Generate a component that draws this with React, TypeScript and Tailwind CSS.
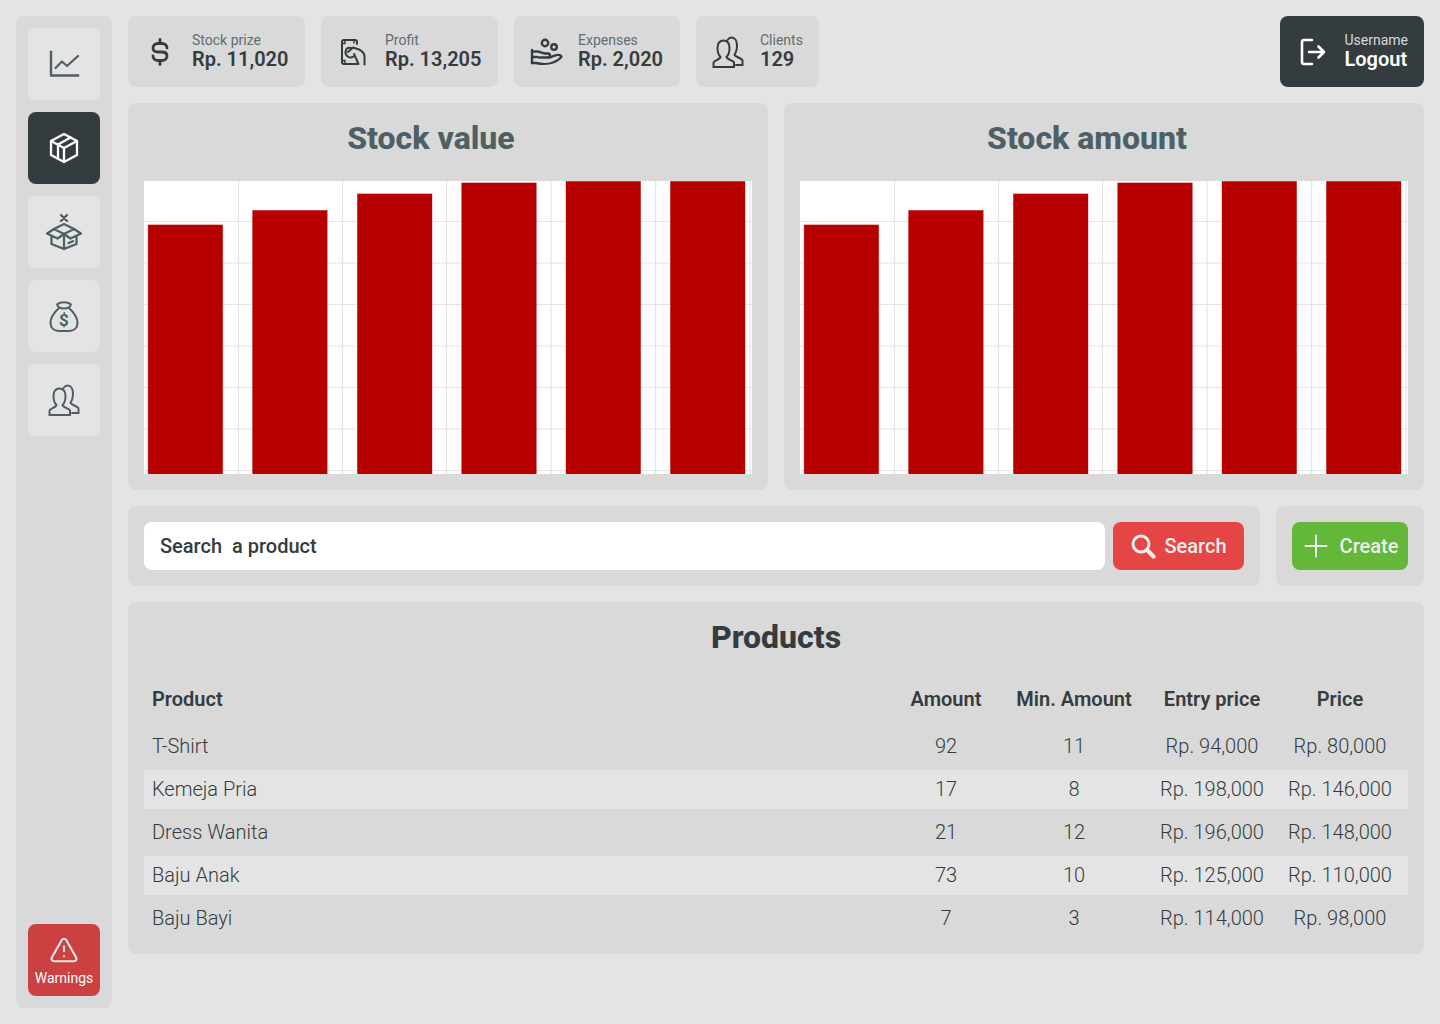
import type { ReactNode } from "react";
import { TriangleAlert } from "lucide-react";

const Icon = ({ children, className = "" }: { children: ReactNode; className?: string }) => (
  <svg
    viewBox="0 0 36 36"
    fill="none"
    stroke="currentColor"
    strokeWidth="2"
    strokeLinecap="round"
    strokeLinejoin="round"
    className={`h-9 w-9 shrink-0 overflow-visible ${className}`}
  >
    {children}
  </svg>
);

const ChartIcon = () => (
  <Icon>
    <path d="M5 6V29.5H32" strokeLinecap="square" strokeWidth="2.4" />
    <path d="M9.5 22L16 15.5L21 20L32 10" strokeWidth="2.2" />
  </Icon>
);

const BoxIcon = () => (
  <Icon>
    <path d="M18 4L31 11V25L18 32L5 25V11Z" strokeWidth="2.3" />
    <path d="M5 11L18 18L31 11M18 18V32M24.5 7.5L12 14.5V28.5" strokeWidth="2.3" />
  </Icon>
);

const OpenBoxIcon = () => (
  <Icon>
    <path d="M15 1L21 7M21 1L15 7" strokeWidth="2.4" />
    <path d="M8 15L18 10L28 15L18 20Z" strokeWidth="2.3" />
    <path d="M8 15L1 19.5L11.5 24.5L18 20L24.5 24.5L35 19.5L28 15" strokeWidth="2.3" />
    <path d="M5.5 22.5V30L18 35L30.5 30V22.5M18 20V35M22.5 29L27 27.2" strokeWidth="2.3" />
  </Icon>
);

const BagIcon = () => (
  <Icon>
    <path d="M11 6.5C14 3.5 22 3.5 25 6.5C24 9.5 22 10.5 18 10.5C14 10.5 12 9.5 11 6.5Z" />
    <path d="M13 10C8 14.5 4.5 20 4.5 25C4.5 30 8 33 13 33H23C28 33 31.5 30 31.5 25C31.5 20 28 14.5 23 10" />
    <text
      x="18"
      y="28"
      fill="currentColor"
      stroke="none"
      textAnchor="middle"
      className="text-[17px] font-bold"
    >
      $
    </text>
  </Icon>
);

const UsersIcon = () => (
  <Icon>
    <path
      d="M3.5 33V28.5C3.5 27 10 25.5 10.5 23C8 20.5 7.5 17 7.5 14C7.5 9 10 6.5 13.5 6.5C17 6.5 19.5 9 19.5 14C19.5 17 19 20.5 16.5 23C17 25.5 24 27 24 28.5V33Z"
      strokeLinejoin="miter"
    />
    <path
      d="M17.5 6C18.5 4.5 20 3.5 21.5 3.5C25 3.5 27 7 27 11.5C27 14.5 26.5 18 24.5 20.5C25 23 32.5 24.5 32.5 26.5V31H26"
      strokeLinejoin="miter"
    />
  </Icon>
);

const DollarIcon = () => (
  <Icon>
    <path
      d="M18 5.5V9.5M18 26.5V30.5M25 14C25 11.5 23 9.5 20 9.5H16C13 9.5 11 11.5 11 14C11 16.5 13 18 16 18H20C23 18 25 19.5 25 22C25 24.5 23 26.5 20 26.5H16C13 26.5 11 24.5 11 22"
      strokeWidth="2.8"
    />
  </Icon>
);

const ProfitIcon = () => (
  <Icon>
    <path d="M22 10V8A2 2 0 0 0 20 6H9A2 2 0 0 0 7 8V28A2 2 0 0 0 9 30H22" />
    <path d="M7.5 9.5H10V6.5M19 6.5V9M7.5 26.5H10V29.5" strokeWidth="1.5" />
    <path d="M16 14C11.5 12.5 9.5 17 11 20.5C12.5 23.5 16 24.5 18.5 22.5" />
    <path d="M13 18L18 13.5L24 15.5C28 17.5 29.5 19.5 29.5 22.5V30.5M19 20L23.5 30" />
  </Icon>
);

const ExpensesIcon = () => (
  <Icon>
    <circle cx="17" cy="9" r="3.2" strokeWidth="2.4" />
    <circle cx="26" cy="13" r="2.8" strokeWidth="2.4" />
    <path d="M4 16V29M4 17.5H9C12 17.5 15 19.5 17 19.5H20C22.5 19.5 22.5 23.5 20 23.5H11" strokeWidth="2.4" />
    <path d="M4 29H8C12 30 20 30.5 25 28.5C29 27 32 25 33.5 22.5C32 20 28 20.5 22 23.5" strokeWidth="2.4" />
    <path d="M4 23H9" strokeWidth="2.4" />
  </Icon>
);

const LogoutIcon = () => (
  <Icon>
    <path d="M18 6H10A2 2 0 0 0 8 8V28A2 2 0 0 0 10 30H18" strokeWidth="2.6" />
    <path d="M15 18H30M24.5 12.5L30 18L24.5 23.5" strokeWidth="2.6" />
  </Icon>
);

const SearchIcon = () => (
  <svg viewBox="0 0 26 26" fill="none" stroke="currentColor" strokeLinecap="round" className="h-[26px] w-[26px] shrink-0">
    <circle cx="11" cy="11" r="8" strokeWidth="3" />
    <path d="M18 18L23.5 23.5" strokeWidth="4.2" />
  </svg>
);

const PlusIcon = () => (
  <svg viewBox="0 0 24 24" fill="none" stroke="currentColor" strokeWidth="2" strokeLinecap="round" className="h-6 w-6 shrink-0">
    <path d="M12 1.5V22.5M1.5 12H22.5" />
  </svg>
);

const navItems = [
  { icon: <ChartIcon /> },
  { icon: <BoxIcon />, active: true },
  { icon: <OpenBoxIcon /> },
  { icon: <BagIcon /> },
  { icon: <UsersIcon /> },
];

const stats = [
  { label: "Stock prize", value: "Rp. 11,020", icon: <DollarIcon />, width: "w-[177px]" },
  { label: "Profit", value: "Rp. 13,205", icon: <ProfitIcon />, width: "w-[177px]" },
  { label: "Expenses", value: "Rp. 2,020", icon: <ExpensesIcon />, width: "w-[166px]" },
  { label: "Clients", value: "129", icon: <UsersIcon />, width: "w-[123px]" },
];

const barX = [4.1, 108.6, 213.4, 317.7, 422, 526.4];
const barTop = [43.9, 29.4, 12.9, 1.9, 0.4, 0.4];
const gridY = [40.5, 82, 123.5, 165, 206.5, 248, 289.5];
const gridX = [94.5, 198.5, 302.5, 407, 511.5, 606];

const BarChart = () => (
  <svg viewBox="0 0 608 293" className="block h-[293px] w-full bg-white">
    {gridY.map((y) => (
      <line key={y} x1="0" x2="608" y1={y} y2={y} stroke="#e4e4e4" strokeWidth="1.2" />
    ))}
    {gridX.map((x) => (
      <line key={x} x1={x} x2={x} y1="0" y2="293" stroke="#e4e4e4" strokeWidth="1.2" />
    ))}
    {barX.map((x, i) => (
      <rect
        key={x}
        x={x}
        y={barTop[i]}
        width="74.6"
        height={293 - barTop[i]}
        fill="#b90000"
        stroke="#b90000"
        strokeOpacity="0.45"
        strokeWidth="0.8"
      />
    ))}
  </svg>
);

const products = [
  ["T-Shirt", "92", "11", "Rp. 94,000", "Rp. 80,000"],
  ["Kemeja Pria", "17", "8", "Rp. 198,000", "Rp. 146,000"],
  ["Dress Wanita", "21", "12", "Rp. 196,000", "Rp. 148,000"],
  ["Baju Anak", "73", "10", "Rp. 125,000", "Rp. 110,000"],
  ["Baju Bayi", "7", "3", "Rp. 114,000", "Rp. 98,000"],
];

const ChartCard = ({ title }: { title: string }) => (
  <div className="flex-1 rounded-lg bg-[#d9d9d9] p-4">
    <h2 className="mb-6 pr-[34px] text-center text-[32px] leading-[38px] font-extrabold text-[#4f5f66]">
      {title}
    </h2>
    <BarChart />
  </div>
);

export default function App() {
  return (
    <div className="flex h-screen gap-4 bg-[#e4e4e4] p-4 font-[Roboto,sans-serif] text-[#343c40]">
      <aside className="flex w-24 shrink-0 flex-col justify-between rounded-lg bg-[#d9d9d9] p-3">
        <nav className="flex flex-col gap-3">
          {navItems.map((item, i) => (
            <div
              key={i}
              className={`flex h-[72px] items-center justify-center rounded-lg ${
                item.active ? "bg-[#343c40] text-white" : "bg-[#e4e4e4] text-[#4f5f66]"
              }`}
            >
              {item.icon}
            </div>
          ))}
        </nav>
        <div className="flex h-[72px] flex-col items-center justify-center gap-[5px] rounded-lg bg-[#cb4040] pt-px text-white">
          <TriangleAlert className="h-[30px] w-[30px] text-[#e6e6e6]" strokeWidth={1.7} />
          <span className="text-sm leading-4">Warnings</span>
        </div>
      </aside>

      <main className="flex min-w-0 flex-1 flex-col gap-4">
        <header className="flex justify-between">
          <div className="flex gap-4">
            {stats.map((s) => (
              <div key={s.label} className={`flex h-[71px] items-center gap-4 rounded-lg bg-[#d9d9d9] px-4 ${s.width}`}>
                <div className="flex w-8 justify-center">{s.icon}</div>
                <div>
                  <p className="text-sm leading-4 text-[#5d6d73]">{s.label}</p>
                  <p className="text-xl leading-[23px] font-semibold">{s.value}</p>
                </div>
              </div>
            ))}
          </div>
          <div className="flex h-[71px] items-center gap-4 rounded-lg bg-[#343c40] px-4 text-white">
            <div className="flex w-8 justify-center">
              <LogoutIcon />
            </div>
            <div>
              <p className="text-sm leading-4 text-[#d9d9d9]">Username</p>
              <p className="text-xl leading-[23px] font-semibold">Logout</p>
            </div>
          </div>
        </header>

        <section className="flex gap-4">
          <ChartCard title="Stock value" />
          <ChartCard title="Stock amount" />
        </section>

        <section className="flex gap-4">
          <div className="flex flex-1 gap-2 rounded-lg bg-[#d9d9d9] p-4">
            <input
              readOnly
              defaultValue="Search  a product"
              className="h-12 min-w-0 flex-1 rounded-lg bg-white px-4 text-xl font-medium text-[#343c40] outline-none"
            />
            <button className="flex h-12 w-[131px] items-center justify-center gap-2 rounded-lg bg-[#e64545] text-xl font-medium text-[#eeeeee]">
              <SearchIcon />
              Search
            </button>
          </div>
          <div className="w-[148px] rounded-lg bg-[#d9d9d9] p-4">
            <button className="flex h-12 w-full items-center justify-center gap-3 rounded-lg bg-[#63b83a] pl-0.5 text-xl font-medium text-[#eeeeee]">
              <PlusIcon />
              Create
            </button>
          </div>
        </section>

        <section className="rounded-lg bg-[#d9d9d9] px-4 pt-4 pb-3">
          <h2 className="mb-5 text-center text-[32px] leading-[38px] font-extrabold">Products</h2>
          <table className="w-full table-fixed border-separate border-spacing-y-1 text-xl">
            <colgroup>
              <col />
              <col className="w-[100px]" />
              <col className="w-[156px]" />
              <col className="w-[120px]" />
              <col className="w-[136px]" />
            </colgroup>
            <thead>
              <tr className="h-[43px]">
                <th className="px-2 pb-1.5 text-left font-semibold">Product</th>
                <th className="pb-1.5 font-semibold">Amount</th>
                <th className="pb-1.5 font-semibold">Min. Amount</th>
                <th className="pb-1.5 font-semibold">Entry price</th>
                <th className="pb-1.5 font-semibold">Price</th>
              </tr>
            </thead>
            <tbody className="font-light">
              {products.map((row, i) => (
                <tr key={row[0]} className={`h-[39px] ${i % 2 === 1 ? "bg-[#e4e4e4]" : ""}`}>
                  {row.map((cell, j) => (
                    <td key={j} className={`pb-0.5 ${j === 0 ? "px-2 text-left" : "text-center"}`}>
                      {cell}
                    </td>
                  ))}
                </tr>
              ))}
            </tbody>
          </table>
        </section>
      </main>
    </div>
  );
}
